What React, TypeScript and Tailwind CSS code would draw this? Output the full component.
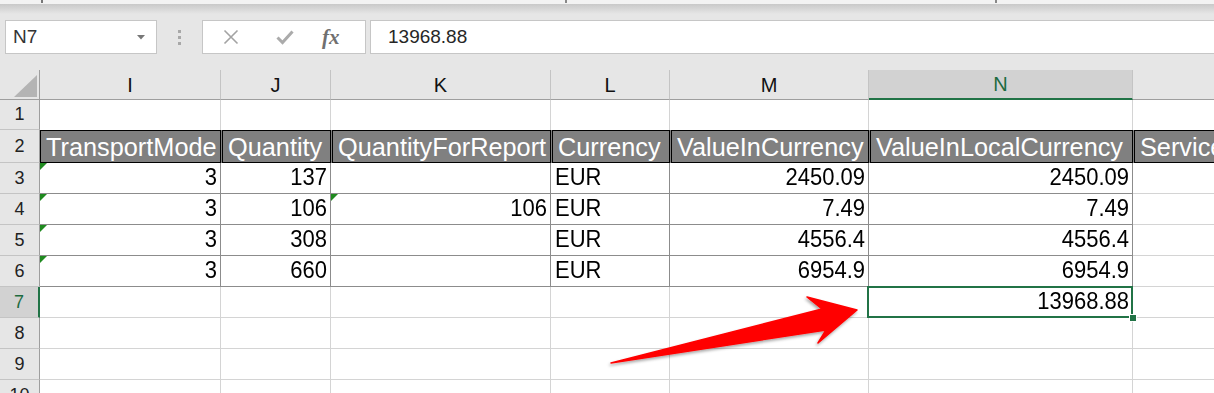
import React from 'react';

const W = ['w-[181px]', 'w-[110px]', 'w-[220px]', 'w-[119px]', 'w-[199px]', 'w-[264px]', 'w-[200px]'];
const LETTERS = ['I', 'J', 'K', 'L', 'M', 'N', ''];
const HEADS = ['TransportMode', 'Quantity', 'QuantityForReport', 'Currency', 'ValueInCurrency', 'ValueInLocalCurrency', 'ServiceType'];

const rows = [
  { n: 3, j: '137', k: '', m: '2450.09' },
  { n: 4, j: '106', k: '106', m: '7.49' },
  { n: 5, j: '308', k: '', m: '4556.4' },
  { n: 6, j: '660', k: '', m: '6954.9' },
];

function Tri() {
  return (
    <svg className="absolute left-0 top-0" width="7" height="7" viewBox="0 0 7 7">
      <polygon points="0,0 7,0 0,7" fill="#1f8a1f" />
    </svg>
  );
}

function RowHead({ n, active = false, h = 'h-[31px]' }: { n: number; active?: boolean; h?: string }) {
  return (
    <div
      className={
        'w-[40px] shrink-0 flex items-center justify-center text-[18px] border-b border-[#c4c4c4] ' +
        h +
        (active
          ? ' bg-[#d2d2d2] text-[#1d6b3f] border-r-2 border-r-[#217346]'
          : ' bg-[#e6e6e6] text-[#222] border-r border-r-[#9e9e9e]')
      }
    >
      {n}
    </div>
  );
}

function Val({ children }: { children: React.ReactNode }) {
  return <span className="inline-block origin-bottom scale-y-[1.08]">{children}</span>;
}

function TopBar() {
  return (
    <div className="h-[70px] bg-[#e6e6e6] flex flex-col">
      <div className="h-[4px] bg-[#f3f3f3] flex items-start">
        <div className="ml-[41px] w-[2px] h-[3px] bg-[#777]" />
        <div className="ml-[522px] w-[2px] h-[3px] bg-[#888]" />
        <div className="ml-[428px] w-[2px] h-[3px] bg-[#888]" />
      </div>
      <div className="h-[10px] bg-gradient-to-b from-[#c9c9c9] to-[#e6e6e6]" />
      <div className="mt-[6px] flex items-center pl-[5px]">
        <div className="w-[152px] h-[34px] bg-white border border-[#c6c6c6] flex items-center justify-between pl-[7px] pr-[11px]">
          <span className="text-[19px] text-[#333]">N7</span>
          <svg width="8" height="5" viewBox="0 0 8 5">
            <polygon points="0,0 8,0 4,4.5" fill="#777" />
          </svg>
        </div>
        <div className="w-[45px] flex flex-col items-center gap-[3px]">
          <div className="w-[3px] h-[3px] bg-[#a8a8a8]" />
          <div className="w-[3px] h-[3px] bg-[#a8a8a8]" />
          <div className="w-[3px] h-[3px] bg-[#a8a8a8]" />
        </div>
        <div className="w-[164px] h-[34px] bg-white border border-[#c6c6c6] flex items-center">
          <svg className="ml-[20px]" width="16" height="16" viewBox="0 0 16 16">
            <path d="M1.5 1.5 L14.5 14.5 M14.5 1.5 L1.5 14.5" stroke="#a3a3a3" strokeWidth="1.6" fill="none" />
          </svg>
          <svg className="ml-[37px]" width="18" height="15" viewBox="0 0 18 15">
            <path d="M1.5 7.5 L6.5 12.5 L16.5 1.5" stroke="#ababab" strokeWidth="3" fill="none" />
          </svg>
          <span className="ml-[28px] font-['Liberation_Serif',serif] italic font-bold text-[21px] text-[#707070] leading-none">fx</span>
        </div>
        <div className="ml-[4px] flex-1 h-[34px] bg-white border-y border-l border-[#c6c6c6] flex items-center pl-[17px] text-[19px] text-[#262626]">
          13968.88
        </div>
      </div>
    </div>
  );
}

function ColumnHeaders() {
  return (
    <div className="h-[30px] flex">
      <div className="w-[40px] shrink-0 bg-[#e6e6e6] border-r border-b border-[#9e9e9e] relative">
        <svg className="absolute left-0 top-0" width="40" height="30" viewBox="0 0 40 30">
          <polygon points="14,27 37,27 37,5" fill="#b4b4b4" />
        </svg>
      </div>
      {LETTERS.map((l, i) => (
        <div
          key={i}
          className={
            W[i] +
            ' shrink-0 flex items-center justify-center text-[20px] ' +
            (l === 'N'
              ? 'bg-[#d2d2d2] text-[#1d6b3f] border-r border-r-[#c4c4c4] border-b-2 border-b-[#217346]'
              : 'bg-[#e6e6e6] text-[#111] border-r border-r-[#c4c4c4] border-b border-b-[#9e9e9e]')
          }
        >
          {l}
        </div>
      ))}
    </div>
  );
}

function EmptyRow({ n, active = false }: { n: number; active?: boolean }) {
  return (
    <div className="h-[31px] flex">
      <RowHead n={n} active={active} />
      {W.map((w, i) => (
        <div key={i} className={w + ' shrink-0 relative border-r border-b border-[#d4d4d4] flex items-end justify-end pr-[3px] pb-[4px] text-[22px] leading-none'}>
          {active && i === 5 && (
            <>
              <Val>13968.88</Val>
              <div className="absolute z-10 -left-[2px] -top-[1px] -right-[1px] -bottom-[1px] border-2 border-[#217346]" />
              <div className="absolute z-20 -right-[5px] -bottom-[5px] w-[8px] h-[8px] bg-[#217346] border border-white" />
            </>
          )}
        </div>
      ))}
    </div>
  );
}

export default function App() {
  return (
    <div className="relative w-[1214px] h-[393px] overflow-hidden bg-white font-['Liberation_Sans',Arial,sans-serif] text-black">
      <TopBar />
      <ColumnHeaders />

      <div className="h-[30px] flex">
        <RowHead n={1} h="h-[30px]" />
        {W.map((w, i) => (
          <div key={i} className={w + ' shrink-0 border-r border-[#d4d4d4]'} />
        ))}
      </div>

      <div className="h-[33px] flex">
        <RowHead n={2} h="h-[33px]" />
        {HEADS.map((t, i) => (
          <div key={i} className={W[i] + ' shrink-0 flex bg-[#808080]'}>
            <div
              className={
                'flex-1 min-w-0 border border-black flex items-end pl-[5px] pb-[2px] text-white text-[25.3px] leading-none whitespace-nowrap overflow-hidden' +
                (i > 0 ? ' ml-px' : '')
              }
            >
              {t}
            </div>
          </div>
        ))}
      </div>

      {rows.map((r) => (
        <div key={r.n} className="h-[31px] flex">
          <RowHead n={r.n} />
          <div className={W[0] + ' shrink-0 relative border-r border-b border-[#8c8c8c] flex items-end justify-end pr-[3px] pb-[4px] text-[22px] leading-none'}>
            <Tri />
            <Val>3</Val>
          </div>
          <div className={W[1] + ' shrink-0 border-r border-b border-[#8c8c8c] flex items-end justify-end pr-[3px] pb-[4px] text-[22px] leading-none'}>
            <Val>{r.j}</Val>
          </div>
          <div className={W[2] + ' shrink-0 relative border-r border-b border-[#8c8c8c] flex items-end justify-end pr-[3px] pb-[4px] text-[22px] leading-none'}>
            {r.k && (
              <>
                <Tri />
                <Val>{r.k}</Val>
              </>
            )}
          </div>
          <div className={W[3] + ' shrink-0 border-r border-b border-[#8c8c8c] flex items-end pl-[4px] pb-[4px] text-[22px] leading-none'}>
            <Val>EUR</Val>
          </div>
          <div className={W[4] + ' shrink-0 border-r border-b border-[#8c8c8c] flex items-end justify-end pr-[3px] pb-[4px] text-[22px] leading-none'}>
            <Val>{r.m}</Val>
          </div>
          <div className={W[5] + ' shrink-0 border-r border-b border-[#8c8c8c] flex items-end justify-end pr-[3px] pb-[4px] text-[22px] leading-none'}>
            <Val>{r.m}</Val>
          </div>
          <div className={W[6] + ' shrink-0 border-b border-[#d4d4d4]'} />
        </div>
      ))}

      <EmptyRow n={7} active />
      <EmptyRow n={8} />
      <EmptyRow n={9} />
      <EmptyRow n={10} />

      <svg className="absolute left-0 top-0 pointer-events-none" width="1214" height="393" viewBox="0 0 1214 393">
        <defs>
          <filter id="sh" x="-10%" y="-30%" width="120%" height="160%">
            <feDropShadow dx="-1" dy="2" stdDeviation="1.5" floodColor="#000" floodOpacity="0.35" />
          </filter>
        </defs>
        <polygon
          points="611,363 822,309 807,297 857,310 818,343 826,330"
          fill="#ff0000"
          stroke="#ff0000"
          strokeWidth="1.5"
          strokeLinejoin="round"
          filter="url(#sh)"
        />
      </svg>
    </div>
  );
}
